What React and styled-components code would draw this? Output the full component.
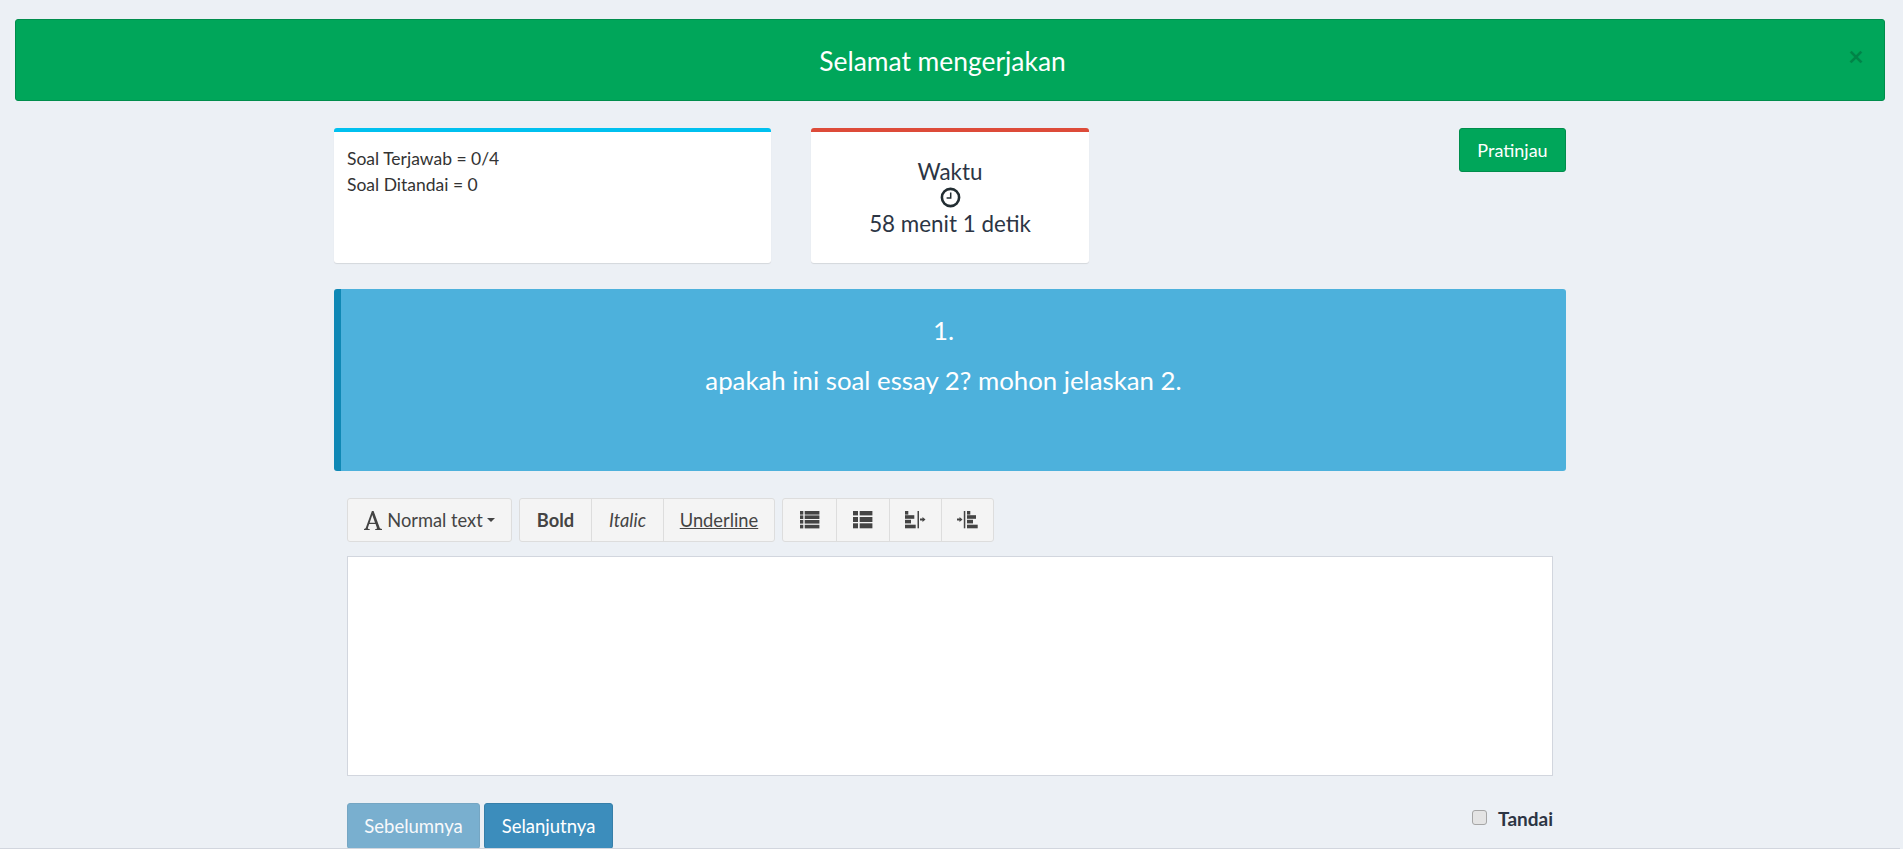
import React from 'react'
import styled, { createGlobalStyle } from 'styled-components'

const GlobalStyle = createGlobalStyle`
  html, body {
    margin: 0;
    padding: 0;
    background: #ecf0f5;
    overflow: hidden;
  }
  body {
    font-family: Lato, 'Noto Sans', sans-serif;
    color: #333;
  }
`

const Page = styled.div`
  width: 1900px;
  height: 849px;
  padding: 19px 15px 0;
  box-sizing: border-box;
  border-bottom: 1px solid #d2d6de;
  overflow: hidden;
`

const Alert = styled.div`
  position: relative;
  height: 82px;
  box-sizing: border-box;
  padding: 2px 15px 0 0;
  background: #00a65a;
  border: 1px solid #008d4c;
  border-radius: 3px;
  color: #fff;
  font-size: 26.4px;
  display: flex;
  align-items: center;
  justify-content: center;
`

const CloseIcon = styled.span`
  position: absolute;
  top: 22px;
  right: 20px;
  color: #000;
  opacity: 0.2;
  font-size: 27px;
  font-weight: 700;
  line-height: 1;
`

const Content = styled.div`
  width: 1232px;
  margin: 27px auto 0;
`

const TopRow = styled.div`
  display: flex;
  align-items: flex-start;
`

const Box = styled.div`
  width: ${({ $width }) => $width}px;
  height: 135px;
  margin-right: ${({ $gap }) => $gap || 0}px;
  box-sizing: border-box;
  background: #fff;
  border-top: 4px solid ${({ $accent }) => $accent};
  border-radius: 3px;
  box-shadow: 0 1px 1px rgba(0, 0, 0, 0.1);
`

const StatusBody = styled.div`
  padding: 14px 13px;
  font-size: 17.5px;
  line-height: 26px;
`

const TimerBody = styled.div`
  padding: 26px 0 0;
  font-size: 22.4px;
  line-height: 27px;
  text-align: center;
  color: #2c3544;
`

const ClockWrap = styled.div`
  height: 25px;
  display: flex;
  align-items: center;
  justify-content: center;
`

const GreenButton = styled.button`
  margin-left: auto;
  width: 107px;
  height: 44px;
  background: #00a65a;
  border: 1px solid #008d4c;
  border-radius: 3px;
  color: #fff;
  font-family: inherit;
  font-size: 18px;
  padding: 0;
`

const Question = styled.div`
  height: 182px;
  margin-top: 26px;
  padding: 24px 20px 0 0;
  box-sizing: border-box;
  background: #4db1dc;
  border-left: 7px solid #0f88b5;
  border-radius: 3px;
  color: #fff;
  font-size: 25.8px;
  line-height: 34px;
  text-align: center;
`

const QuestionLine = styled.div`
  margin-bottom: 16px;
`

const EditorArea = styled.div`
  padding: 27px 13px 0;
`

const Toolbar = styled.div`
  display: flex;
  gap: 7px;
  height: 44px;
`

const ToolGroup = styled.div`
  display: flex;
  height: 44px;
  box-sizing: border-box;
  background: #f4f4f4;
  border: 1px solid #ddd;
  border-radius: 3px;
`

const ToolButton = styled.div`
  width: ${({ $width }) => $width}px;
  box-sizing: border-box;
  display: flex;
  align-items: center;
  justify-content: center;
  gap: 4px;
  font-size: 18.3px;
  color: #444;
  font-weight: ${({ $bold }) => ($bold ? 700 : 400)};
  font-style: ${({ $italic }) => ($italic ? 'italic' : 'normal')};
  text-decoration: ${({ $underline }) => ($underline ? 'underline' : 'none')};
  & + & {
    border-left: 1px solid #ddd;
  }
`

const Caret = styled.span`
  width: 0;
  height: 0;
  border-left: 4.5px solid transparent;
  border-right: 4.5px solid transparent;
  border-top: 4.5px solid #444;
`

const TextBox = styled.div`
  height: 220px;
  margin-top: 14px;
  box-sizing: border-box;
  background: #fff;
  border: 1px solid #d2d6de;
`

const FooterRow = styled.div`
  display: flex;
  align-items: flex-start;
  justify-content: space-between;
  margin-top: 27px;
`

const NavGroup = styled.div`
  display: flex;
  gap: 4px;
`

const NavButton = styled.button`
  width: ${({ $width }) => $width}px;
  height: 46px;
  padding: 0;
  background: #3c8dbc;
  border: 1px solid #367fa9;
  border-radius: 3px;
  color: #fff;
  font-family: inherit;
  font-size: 18.5px;
  &:disabled {
    opacity: 0.65;
  }
`

const MarkLabel = styled.label`
  display: flex;
  align-items: center;
  gap: 11px;
  padding-top: 4px;
  font-size: 19px;
  font-weight: 700;
  color: #2c3544;
`

const MarkBox = styled.input`
  appearance: none;
  width: 15px;
  height: 15px;
  margin: 0 0 2px;
  box-sizing: border-box;
  background: #e4e4e4;
  border: 1px solid #a6a6a6;
  border-radius: 3px;
`

const ClockIcon = () => (
  <svg width="21" height="21" viewBox="0 0 21 21" fill="none" stroke="#222d32">
    <circle cx="10.5" cy="10.5" r="8.6" strokeWidth="2.6" />
    <path d="M10.7 5.5v5.6H6.6" strokeWidth="1.5" />
  </svg>
)

const FontIcon = () => (
  <svg width="19" height="19" viewBox="0 0 19 19" fill="#444">
    <path d="M0 19v-1.100c1 0 1.500-.3 1.900-1.400L7.900 0h1.700l6 16.500c.4 1.100.9 1.400 2.400 1.400V19h-6.800v-1.100c1.600 0 2-.4 1.600-1.500l-1.200-3.400H5.200L4 16.400c-.4 1.100.1 1.500 1.700 1.500V19H0zm5.700-7.300h5.300L8.300 4.100 5.700 11.700z" />
  </svg>
)

const ListIcon = () => (
  <svg width="20" height="18" viewBox="0 0 20 18" fill="#444">
    <rect x="0" y="0" width="3.300" height="3.600" />
    <rect x="0" y="4.400" width="3.300" height="3.600" />
    <rect x="0" y="9" width="3.300" height="3.600" />
    <rect x="0" y="13.800" width="3.300" height="3.600" />
    <rect x="4.700" y="0" width="14.700" height="3.600" />
    <rect x="4.700" y="4.400" width="14.700" height="3.600" />
    <rect x="4.700" y="9" width="14.700" height="3.600" />
    <rect x="4.700" y="13.800" width="14.700" height="3.600" />
  </svg>
)

const TableIcon = () => (
  <svg width="20" height="18" viewBox="0 0 20 18" fill="#444">
    <rect x="0" y="0" width="5" height="4.400" />
    <rect x="0" y="6" width="5" height="5" />
    <rect x="0" y="12.300" width="5" height="5" />
    <rect x="6.700" y="0" width="12.700" height="4.400" />
    <rect x="6.700" y="6" width="12.700" height="5" />
    <rect x="6.700" y="12.300" width="12.700" height="5" />
  </svg>
)

const OutdentIcon = () => (
  <svg width="21" height="18" viewBox="0 0 21 18" fill="#444">
    <rect x="0" y="0" width="3.300" height="3.600" />
    <rect x="0" y="4.200" width="9.300" height="3.600" />
    <rect x="0" y="8.800" width="6" height="3.600" />
    <rect x="0" y="13.700" width="10.700" height="3.600" />
    <rect x="12.500" y="0" width="1.500" height="17.300" />
    <path d="M15 7.500h2.500V6l3 2.500-3 2.500V9.500H15z" />
  </svg>
)

const IndentIcon = () => (
  <svg width="21" height="18" viewBox="0 0 21 18" fill="#444">
    <rect x="10" y="0" width="3.300" height="3.600" />
    <rect x="10" y="4.200" width="9" height="3.600" />
    <rect x="10" y="8.800" width="6" height="3.600" />
    <rect x="10" y="13.700" width="10.700" height="3.600" />
    <rect x="6.800" y="0" width="1.500" height="17.300" />
    <path d="M0 7.500h2.500V6l3 2.500-3 2.500V9.500H0z" />
  </svg>
)

export default function App() {
  return (
    <>
      <GlobalStyle />
      <Page>
        <Alert>
          Selamat mengerjakan
          <CloseIcon>×</CloseIcon>
        </Alert>
        <Content>
          <TopRow>
            <Box $width={437} $gap={40} $accent="#00c0ef">
              <StatusBody>
                Soal Terjawab = 0/4
                <br />
                Soal Ditandai = 0
              </StatusBody>
            </Box>
            <Box $width={278} $accent="#dd4b39">
              <TimerBody>
                Waktu
                <ClockWrap>
                  <ClockIcon />
                </ClockWrap>
                58 menit 1 detik
              </TimerBody>
            </Box>
            <GreenButton>Pratinjau</GreenButton>
          </TopRow>
          <Question>
            <QuestionLine>1.</QuestionLine>
            <QuestionLine>apakah ini soal essay 2? mohon jelaskan 2.</QuestionLine>
          </Question>
          <EditorArea>
            <Toolbar>
              <ToolGroup>
                <ToolButton $width={163}>
                  <FontIcon />
                  Normal text
                  <Caret />
                </ToolButton>
              </ToolGroup>
              <ToolGroup>
                <ToolButton $width={71} $bold>Bold</ToolButton>
                <ToolButton $width={72} $italic>Italic</ToolButton>
                <ToolButton $width={111} $underline>Underline</ToolButton>
              </ToolGroup>
              <ToolGroup>
                <ToolButton $width={53}><ListIcon /></ToolButton>
                <ToolButton $width={53}><TableIcon /></ToolButton>
                <ToolButton $width={52}><OutdentIcon /></ToolButton>
                <ToolButton $width={52}><IndentIcon /></ToolButton>
              </ToolGroup>
            </Toolbar>
            <TextBox />
            <FooterRow>
              <NavGroup>
                <NavButton $width={133} disabled>Sebelumnya</NavButton>
                <NavButton $width={129}>Selanjutnya</NavButton>
              </NavGroup>
              <MarkLabel>
                <MarkBox type="checkbox" />
                Tandai
              </MarkLabel>
            </FooterRow>
          </EditorArea>
        </Content>
      </Page>
    </>
  )
}
